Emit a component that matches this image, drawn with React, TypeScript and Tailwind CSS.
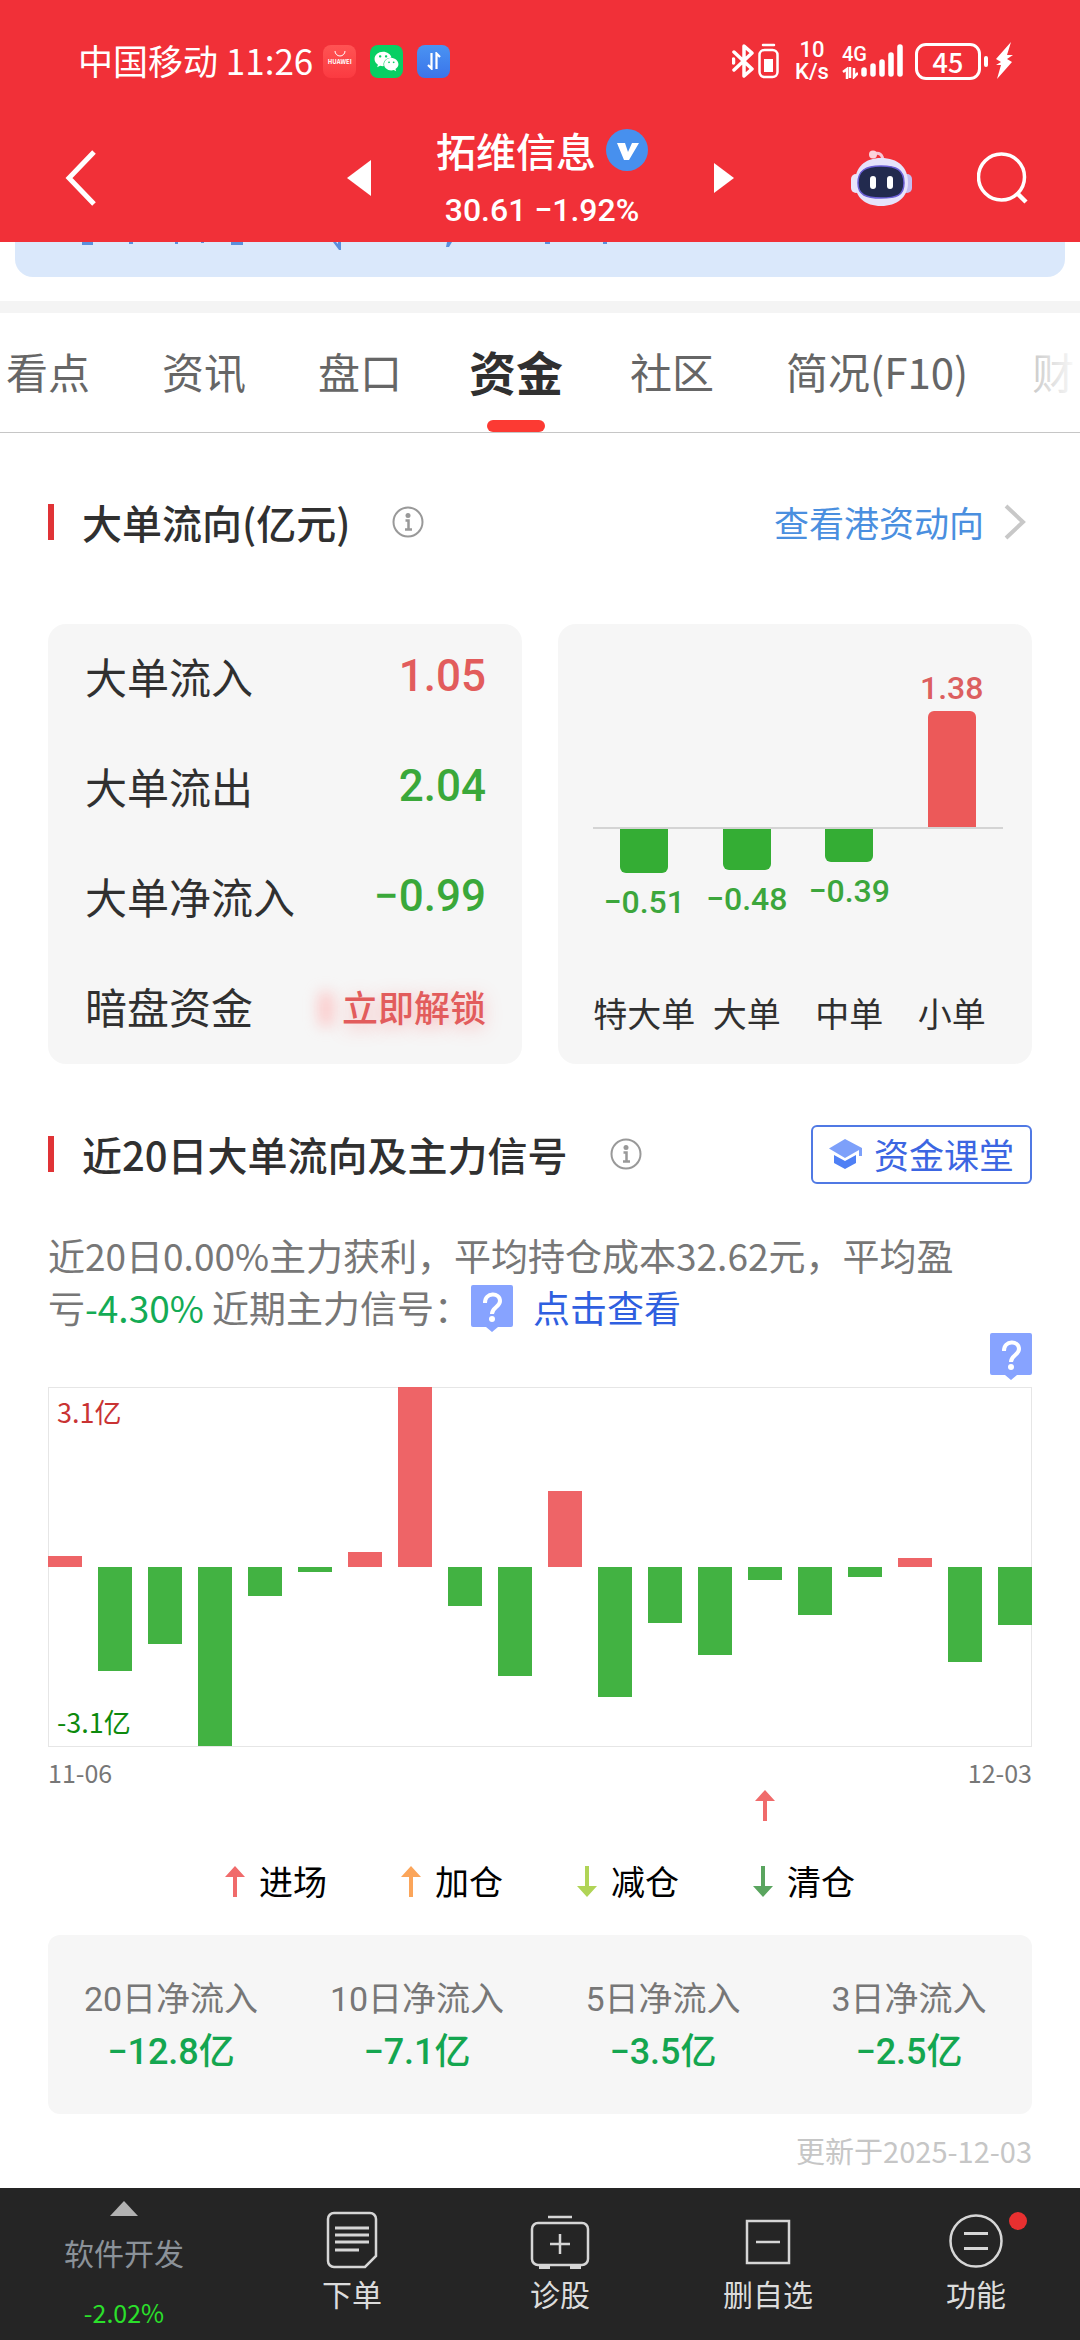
import React from 'react';
import { FaWeixin } from 'react-icons/fa';

interface NetFlow {
  label: string;
  value: string;
}

const tabs = ['看点', '资讯', '盘口', '资金', '社区', '简况(F10)', '财'];

const orderFlow = [
  { label: '特大单', value: '−0.51', height: -44 },
  { label: '大单', value: '−0.48', height: -41 },
  { label: '中单', value: '−0.39', height: -33 },
  { label: '小单', value: '1.38', height: 116 },
];

// net inflow per trading day, scaled so that 180 is the full half of the chart
const dailyFlow = [
  11, -104, -77, -179, -29, -5, 15, 180, -39, -109, 76, -130, -56, -88, -13, -48, -10, 9, -95, -58,
];

const signalDay = 14;

const summary: NetFlow[] = [
  { label: '20日净流入', value: '−12.8亿' },
  { label: '10日净流入', value: '−7.1亿' },
  { label: '5日净流入', value: '−3.5亿' },
  { label: '3日净流入', value: '−2.5亿' },
];

const legend = [
  { label: '进场', color: 'text-[#f06b6b]', up: true },
  { label: '加仓', color: 'text-[#fba55a]', up: true },
  { label: '减仓', color: 'text-[#b0d456]', up: false },
  { label: '清仓', color: 'text-[#5aa55f]', up: false },
];

const StatusBar: React.FC = () => (
  <div className="flex h-[122px] items-center justify-between pl-[78px] pr-[67px]">
    <div className="flex items-center gap-[14px]">
      <span className="mr-[-4px] pb-[2px] text-[35px] leading-[48px]">中国移动 11:26</span>
      <span className="flex h-[33px] w-[33px] flex-col items-center rounded-lg bg-gradient-to-b from-[#ff5353] to-[#fb3a41] pt-[6px]">
        <svg viewBox="0 0 12 6" className="h-[6px] w-3" fill="none" stroke="white">
          <path d="M1 0a5 5 0 0 0 10 0" />
        </svg>
        <span className="mt-px text-[6px] font-bold leading-[8px]">HUAWEI</span>
      </span>
      <span className="flex h-[33px] w-[33px] items-center justify-center rounded-lg bg-[#07cf63]">
        <FaWeixin className="h-[25px] w-[25px]" />
      </span>
      <span className="flex h-[33px] w-[33px] items-center justify-center rounded-lg bg-gradient-to-b from-[#4a93f2] to-[#3b74ea]">
        <svg viewBox="0 0 14 18" className="h-[18px] w-[14px]" fill="none" stroke="white" strokeWidth="2.2">
          <path d="M4.500 1v15.500L1 13M9.500 17V1.500L13 5" />
        </svg>
      </span>
    </div>

    <div className="flex items-center">
      <svg viewBox="0 0 22 36" className="h-9 w-[22px]" fill="none" stroke="white" strokeWidth="3.500" strokeLinejoin="round" strokeLinecap="round">
        <path d="M2 9l18 17-8 7V3l8 7L2 27M1.500 16v4" />
      </svg>
      <svg viewBox="0 0 22 36" className="ml-1 h-9 w-[22px]" fill="none" stroke="white" strokeWidth="2.500">
        <rect x="1.500" y="7" width="18" height="27" rx="5" />
        <rect x="6" y="16" width="9" height="13" fill="white" stroke="none" />
        <path d="M5 2h11" strokeLinecap="round" />
      </svg>
      <div className="ml-[14px] flex w-[36px] flex-col items-center font-['Roboto','Noto_Sans_CJK_SC',sans-serif] text-[22px] font-medium leading-[22px]">
        <span className="block h-[22px]">10</span>
        <span className="block h-[22px]">K/s</span>
      </div>
      <div className="ml-3 flex flex-col items-start font-['Roboto','Noto_Sans_CJK_SC',sans-serif] text-[20px] font-medium leading-[20px]">
        <span>4G</span>
        <svg viewBox="0 0 16 12" className="mt-[3px] h-3 w-4" fill="none" stroke="white" strokeWidth="2.500">
          <path d="M1 5l4-3v10M8 0v11M12 1v9l4-4" />
        </svg>
      </div>
      <svg viewBox="0 0 44 36" className="-ml-[7px] h-9 w-[44px]" stroke="white" strokeWidth="5.500" strokeLinecap="round">
        <path d="M4 31v-4M13 31v-8M22 31V19M31 31V12M40 31V4" />
      </svg>
      <span className="ml-[11px] flex h-[37px] w-[66px] items-center justify-center rounded-[11px] border-[3px] border-white text-[27px] font-medium leading-none">
        45
      </span>
      <span className="ml-[3px] h-[11px] w-1 rounded-full bg-white" />
      <svg viewBox="0 0 18 38" className="ml-[7px] h-[38px] w-[18px]" fill="white">
        <path d="M16 0L1 17l5 3-5 3h5L2 37l15-17-5-3 6-4h-6z" />
      </svg>
    </div>
  </div>
);

const RobotIcon: React.FC = () => (
  <svg viewBox="0 0 61 57" className="h-[57px] w-[61px]">
    <path d="M22 4c6-2 10 0 10 8" fill="none" stroke="#f7c6d6" strokeWidth="3" />
    <circle cx="22" cy="4.500" r="4" fill="#fbd3dc" />
    <rect x="0" y="24" width="10" height="19" rx="5" fill="#e9e4fa" />
    <rect x="51" y="24" width="10" height="19" rx="5" fill="#c4bdf0" />
    <path d="M30 8c17 0 27 9 27 25 0 14-11 23-27 23S4 47 4 33C4 17 14 8 30 8z" fill="#e6e3fb" />
    <path d="M30 16c16 0 23 4 23 17s-8 15-23 15S7 45 7 33s7-17 23-17z" fill="#222a4e" stroke="#6b5fd6" strokeWidth="1.500" />
    <rect x="19" y="26" width="6" height="13" rx="3" fill="white" />
    <rect x="36" y="26" width="6" height="13" rx="3" fill="white" />
  </svg>
);

const StockHeader: React.FC = () => (
  <div className="grid h-[120px] grid-cols-[1fr_387px_1fr] items-center pb-2">
    <button aria-label="返回" className="ml-[65px] justify-self-start">
      <svg viewBox="0 0 31 56" className="h-[56px] w-[31px]" fill="none" stroke="white" strokeWidth="5">
        <path d="M29 2L4 28l25 26" />
      </svg>
    </button>
    <div className="flex items-center justify-between">
      <button aria-label="上一只">
        <svg viewBox="0 0 24 36" className="h-9 w-6" fill="white">
          <path d="M24 0v36L0 18z" />
        </svg>
      </button>
      <div className="flex flex-col items-center">
        <h1 className="flex items-center gap-[10px] text-[40px] font-medium leading-[48px]">
          拓维信息
          <svg viewBox="0 0 42 42" className="h-[42px] w-[42px]">
            <circle cx="21" cy="21" r="21" fill="#4790ee" />
            <path d="M11 14h8l3 9 4-9h7l-10 17h-5z" fill="white" />
          </svg>
        </h1>
        <p className="mt-4 font-['Roboto','Noto_Sans_CJK_SC',sans-serif] text-[32px] font-medium leading-[40px]">
          30.61 −1.92%
        </p>
      </div>
      <button aria-label="下一只">
        <svg viewBox="0 0 20 30" className="h-[30px] w-5" fill="white">
          <path d="M0 0v30l20-15z" />
        </svg>
      </button>
    </div>
    <div className="flex items-center gap-[65px] justify-self-end pr-[52px]">
      <button aria-label="智能助手">
        <RobotIcon />
      </button>
      <button aria-label="搜索">
        <svg viewBox="0 0 51 52" className="h-[52px] w-[51px]" fill="none" stroke="white" strokeWidth="3.500">
          <circle cx="24.500" cy="25" r="23" />
          <path d="M40 41l9 9" strokeWidth="4.500" />
        </svg>
      </button>
    </div>
  </div>
);

const InfoIcon: React.FC = () => (
  <svg viewBox="0 0 32 32" className="h-8 w-8" fill="none" stroke="#999999" strokeWidth="2">
    <circle cx="16" cy="16" r="14.500" />
    <circle cx="16" cy="9.500" r="2.500" fill="#999999" stroke="none" />
    <path d="M13.500 14.500H16.500V23M13 23.500h7" strokeWidth="2.500" />
  </svg>
);

const QuestionMark: React.FC = () => (
  <svg viewBox="0 0 42 47" className="h-[47px] w-[42px]">
    <path d="M2 0h38a2 2 0 0 1 2 2v38a2 2 0 0 1-2 2H27l-6 5-6-5H2a2 2 0 0 1-2-2V2a2 2 0 0 1 2-2z" fill="#87a3ff" />
    <path d="M14 18c0-11 15-11 15-2 0 6-8 6-8 13" fill="none" stroke="white" strokeWidth="4" />
    <circle cx="21" cy="34" r="3" fill="white" />
  </svg>
);

const Arrow: React.FC<{ up: boolean; className: string }> = ({ up, className }) => (
  <svg viewBox="0 0 20 31" className={`h-[31px] w-5 ${className}`} fill="currentColor">
    {up ? <path d="M10 0l10 11h-8v20H8V11H0z" /> : <path d="M10 31L0 20h8V0h4v20h8z" />}
  </svg>
);

const SectionTitle: React.FC<{ title: string; children: React.ReactNode }> = ({ title, children }) => (
  <div className="flex h-[60px] items-center">
    <span className="h-9 w-[6px] bg-[#e03336]" />
    <h2 className="ml-7 text-[40px] font-medium leading-[60px] text-[#303030]">{title}</h2>
    <button aria-label="说明" className="ml-[42px]">
      <InfoIcon />
    </button>
    <div className="ml-auto">{children}</div>
  </div>
);

const FlowRow: React.FC<{ label: string; children: React.ReactNode }> = ({ label, children }) => (
  <div className="flex h-[110px] items-center justify-between pb-[6px]">
    <span className="text-[42px] leading-[50px] text-[#303030]">{label}</span>
    {children}
  </div>
);

const OrderChart: React.FC = () => (
  <div className="rounded-[18px] bg-[#f6f6f6] pl-[35px] pr-[29px] font-['Roboto','Noto_Sans_CJK_SC',sans-serif] text-[32px] font-medium leading-[32px]">
    <div className="grid h-[205px] grid-cols-4 border-b-2 border-[#d4d4d4]">
      {orderFlow.map((item) => (
        <div key={item.label} className="flex flex-col items-center justify-end">
          {item.height > 0 && (
            <>
              <span className="mb-[7px] text-[#dc5f5f]">{item.value}</span>
              <span className="w-12 rounded-t-md bg-[#ec5959]" style={{ height: item.height }} />
            </>
          )}
        </div>
      ))}
    </div>
    <div className="grid h-[166px] grid-cols-4">
      {orderFlow.map((item) => (
        <div key={item.label} className="flex flex-col items-center">
          {item.height < 0 && (
            <>
              <span className="w-12 rounded-b-md bg-[#34ad34]" style={{ height: -item.height }} />
              <span className="mt-[13px] text-[#3ca63c]">{item.value}</span>
            </>
          )}
        </div>
      ))}
    </div>
    <div className="grid grid-cols-4 text-center text-[34px] font-normal leading-[40px] text-[#303030]">
      {orderFlow.map((item) => (
        <span key={item.label} className="whitespace-nowrap">{item.label}</span>
      ))}
    </div>
  </div>
);

const DailyChart: React.FC = () => (
  <>
    <div className="relative mt-[7px] h-[360px] border border-[#e6e6e6]">
      <div className="-mx-px -mt-px flex h-[360px] justify-between">
        {dailyFlow.map((value, index) => (
          <div key={index} className="flex w-[34px] flex-col">
            <div className="flex h-[180px] items-end">
              {value > 0 && <span className="w-full bg-[#ee6467]" style={{ height: value }} />}
            </div>
            {value < 0 && <span className="w-full bg-[#42b242]" style={{ height: -value }} />}
          </div>
        ))}
      </div>
      <span className="absolute left-2 top-1 text-[27px] leading-[40px] text-[#c93333]">3.1亿</span>
      <span className="absolute bottom-1 left-2 text-[27px] leading-[40px] text-[#0d8a0d]">-3.1亿</span>
    </div>
    <div className="mt-[7px] flex justify-between text-[25px] leading-[36px] text-[#777777]">
      <span>11-06</span>
      <span>12-03</span>
    </div>
    <div className="flex h-[31px] justify-between">
      {dailyFlow.map((_, index) => (
        <div key={index} className="flex w-[34px] justify-center">
          {index === signalDay && <Arrow up className="text-[#f06b6b]" />}
        </div>
      ))}
    </div>
  </>
);

const NavButton: React.FC<{ label: string; children: React.ReactNode }> = ({ label, children }) => (
  <button className="flex flex-col items-center pt-[23px] text-[30px] leading-[40px] text-[#dcdcdc]">
    <svg viewBox="0 0 60 58" className="mb-1 h-[58px] w-[60px] overflow-visible" fill="none" stroke="#d6d6d6" strokeWidth="2.500">
      {children}
    </svg>
    {label}
  </button>
);

const BottomNav: React.FC = () => (
  <nav className="mt-auto grid h-[152px] grid-cols-[248fr_208fr_208fr_208fr_208fr] bg-[#252525]">
    <button className="flex flex-col items-center pt-[13px]">
      <svg viewBox="0 0 28 15" className="h-[15px] w-7" fill="#b2b2b2">
        <path d="M14 0l14 15H0z" />
      </svg>
      <span className="mt-4 text-[30px] leading-[40px] text-[#8b9299]">软件开发</span>
      <span className="mt-5 text-[25px] leading-[40px] text-[#2be02b]">-2.02%</span>
    </button>
    <NavButton label="下单">
      <path d="M12 2h36a6 6 0 0 1 6 6v37L43 56H12a6 6 0 0 1-6-6V8a6 6 0 0 1 6-6z" />
      <path d="M13 17h34M13 24h34M13 31h34M13 39h24" strokeWidth="3" />
    </NavButton>
    <NavButton label="诊股">
      <rect x="2" y="12" width="56" height="42" rx="6" />
      <path d="M18 6h24M30 23v20M20 33h20" />
      <path d="M9 56h11M40 56h11" strokeWidth="4" />
    </NavButton>
    <NavButton label="删自选">
      <rect x="9" y="10" width="42" height="42" />
      <path d="M18 31h24" />
    </NavButton>
    <NavButton label="功能">
      <circle cx="30" cy="30" r="25.500" />
      <path d="M18 22.500h24M18 37.500h24" strokeWidth="3" />
      <circle cx="72" cy="10" r="9" fill="#e83030" stroke="none" />
    </NavButton>
  </nav>
);

const App: React.FC = () => {
  return (
    <div className="flex min-h-screen flex-col bg-white font-['Noto_Sans_CJK_SC',sans-serif]">
      <header className="bg-[#f13038] text-white">
        <StatusBar />
        <StockHeader />
      </header>

      {/* bottom edge of the banner that is scrolled under the header */}
      <div className="mx-[15px] h-[35px] rounded-b-[18px] bg-[#dae8fb]">
        <svg viewBox="0 0 600 12" className="h-3 w-[600px]" fill="#5b8fdc">
          <path d="M67 0h11v3H67zM114 0h4v2h-4zM160 0h3v2h-3zM186 0h3v1h-3zM216 0h12v3h-12zM318 0h3l2 2V0h3v8h-2zM432 0h5l-3 5h-3zM530 0h5v2h-5zM588 0h4v2h-4z" />
        </svg>
      </div>
      <div className="mt-6 h-3 bg-[#f4f4f4]" />

      <div className="relative overflow-hidden border-b border-[#c6c6c6]">
        <div role="tablist" className="-ml-[30px] flex h-[119px] w-max">
          {tabs.map((tab) =>
            tab === '资金' ? (
              <button key={tab} role="tab" aria-selected="true" className="relative w-[156px] pb-1 text-[47px] font-bold leading-[60px] text-[#303030]">
                {tab}
                <span className="absolute inset-x-0 bottom-0 mx-auto h-3 w-[58px] rounded-full bg-[#fc3a33]" />
              </button>
            ) : (
              <button key={tab} role="tab" aria-selected="false" className="px-9 pb-1 text-[42px] leading-[60px] text-[#666666] last:pl-7">
                {tab}
              </button>
            )
          )}
        </div>
        <div className="absolute inset-y-0 right-0 w-[70px] bg-gradient-to-r from-white/50 to-white" />
      </div>

      <main className="px-12 pt-[59px]">
        <section>
          <SectionTitle title="大单流向(亿元)">
            <a href="#hk" className="flex items-center pr-[6px] text-[35px] leading-[48px] text-[#4a8fdf]">
              查看港资动向
              <svg viewBox="0 0 22 36" className="ml-5 h-9 w-[22px]" fill="none" stroke="#c8c8c8" strokeWidth="4">
                <path d="M2 2l17 16L2 34" />
              </svg>
            </a>
          </SectionTitle>

          <div className="mt-[72px] grid grid-cols-2 gap-9">
            <div className="rounded-[18px] bg-[#f6f6f6] pl-[37px] pr-9">
              <FlowRow label="大单流入">
                <span className="font-['Roboto','Noto_Sans_CJK_SC',sans-serif] text-[44px] font-medium text-[#e25c5c]">1.05</span>
              </FlowRow>
              <FlowRow label="大单流出">
                <span className="font-['Roboto','Noto_Sans_CJK_SC',sans-serif] text-[44px] font-medium text-[#3aa83a]">2.04</span>
              </FlowRow>
              <FlowRow label="大单净流入">
                <span className="font-['Roboto','Noto_Sans_CJK_SC',sans-serif] text-[44px] font-medium text-[#3aa83a]">−0.99</span>
              </FlowRow>
              <FlowRow label="暗盘资金">
                <button className="relative text-[36px] font-medium text-[#e25c5c] [text-shadow:0_4px_18px_rgba(255,90,90,0.4)]">
                  <span className="absolute -left-6 top-3 h-9 w-4 rounded-full bg-[#ffb0b0]/60 blur-[7px]" />
                  立即解锁
                </button>
              </FlowRow>
            </div>
            <OrderChart />
          </div>
        </section>

        <section className="mt-[60px]">
          <SectionTitle title="近20日大单流向及主力信号">
            <button className="flex h-[59px] items-center rounded-md border-2 border-[#5079e4] px-4 text-[35px] leading-[48px] text-[#3c66e2]">
              <svg viewBox="0 0 33 30" className="mr-3 h-[30px] w-[33px]">
                <path d="M16 0L0 9.500l16 9.500 14-8v6h3V9z" fill="#7da0fa" />
                <path d="M5 16l11 6 11-6v8l-11 6-11-6z" fill="#4f80f5" />
              </svg>
              资金课堂
            </button>
          </SectionTitle>

          <p className="mt-[45px] text-[37px] leading-[52px] text-[#777777]">
            近20日0.00%主力获利，平均持仓成本32.62元，平均盈
            <br />
            亏<span className="text-[#14ab55]">-4.30%</span> 近期主力信号：
            <span className="-mt-[14px] -mb-[6px] mr-5 inline-block align-middle">
              <QuestionMark />
            </span>
            <a href="#signal" className="text-[#2f5fe0]">点击查看</a>
          </p>

          <div className="flex justify-end">
            <QuestionMark />
          </div>
          <DailyChart />

          <div className="mt-10 flex justify-center gap-[74px] text-[34px] leading-[40px] text-black">
            {legend.map((item) => (
              <span key={item.label} className="flex items-center gap-[14px]">
                <Arrow up={item.up} className={item.color} />
                {item.label}
              </span>
            ))}
          </div>

          <div className="mt-[34px] grid grid-cols-4 rounded-xl bg-[#f6f6f6] pb-[38px] pt-[42px] text-center font-['Roboto','Noto_Sans_CJK_SC',sans-serif]">
            {summary.map((item) => (
              <div key={item.label}>
                <div className="text-[34px] leading-[44px] text-[#777777]">{item.label}</div>
                <div className="mt-[7px] text-[36px] font-medium leading-[48px] text-[#14a650]">{item.value}</div>
              </div>
            ))}
          </div>
          <p className="mt-4 text-right text-[29px] leading-[40px] text-[#c6c6c6]">更新于2025-12-03</p>
        </section>
      </main>

      <BottomNav />
    </div>
  );
};

export default App;
